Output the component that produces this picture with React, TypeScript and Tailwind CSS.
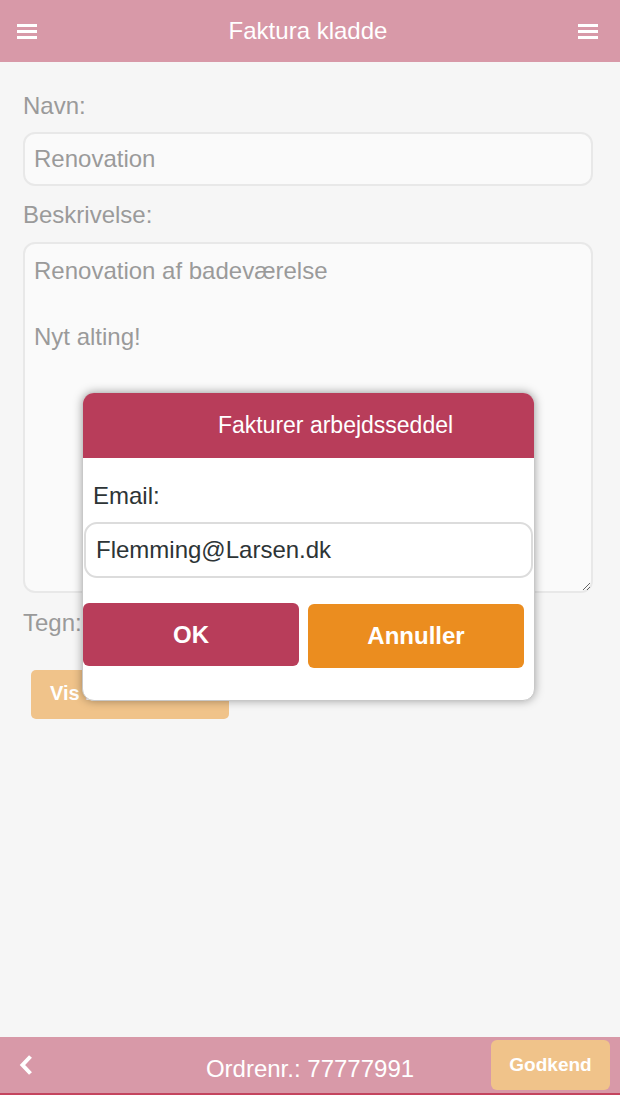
import React from "react";

const font = { fontFamily: '"Liberation Sans", Arial, sans-serif' };

function Burger() {
  return (
    <svg width="20" height="16" viewBox="0 0 20 16" className="block">
      <rect x="0" y="1" width="20" height="3" fill="#fff" />
      <rect x="0" y="7" width="20" height="3" fill="#fff" />
      <rect x="0" y="13" width="20" height="3" fill="#fff" />
    </svg>
  );
}

export default function App() {
  return (
    <div
      className="relative w-[620px] h-[1095px] bg-[#f6f6f6] flex flex-col overflow-hidden"
      style={font}
    >
      {/* Header */}
      <div className="h-[62px] bg-[#d899a8] grid grid-cols-[1fr_auto_1fr] items-center px-[17px] shrink-0">
        <div className="justify-self-start">
          <Burger />
        </div>
        <div className="text-white text-[24px] leading-[28px] mr-[4px]">Faktura kladde</div>
        <div className="justify-self-end mr-[5px]">
          <Burger />
        </div>
      </div>

      {/* Content */}
      <div className="flex-1 px-[23px] pt-[30px] flex flex-col">
        <div className="text-[24px] text-[#9a9a9a] leading-[28px]">Navn:</div>
        <div className="mt-[12px] h-[54px] w-[570px] rounded-[12px] border-2 border-[#e8e8e8] bg-[#fafafa] flex items-center px-[9px] text-[24px] text-[#9a9a9a]">
          Renovation
        </div>
        <div className="mt-[15px] text-[24px] text-[#9a9a9a] leading-[28px]">Beskrivelse:</div>
        <textarea
          readOnly
          className="mt-[13px] h-[351px] w-[570px] rounded-[12px] border-2 border-[#e8e8e8] bg-[#fafafa] px-[9px] pt-[10px] text-[24px] leading-[33px] text-[#9a9a9a] outline-none resize"
          style={font}
          defaultValue={"Renovation af badeværelse\n\nNyt alting!"}
        />
        <div className="mt-[16px] text-[24px] text-[#9a9a9a] leading-[28px]">Tegn:</div>
        <div className="mt-[33px] ml-[8px] w-[198px] h-[49px] rounded-[5px] bg-[#f0c38a] flex items-center px-[19px] pb-[3px] text-white font-bold text-[20px]">
          Vis billede
        </div>
      </div>

      {/* Footer */}
      <div className="h-[58px] bg-[#d899a8] border-b-2 border-[#c4455f] grid grid-cols-[1fr_auto_1fr] items-center px-[10px] shrink-0">
        <div className="justify-self-start ml-[8px]">
          <svg width="16" height="22" viewBox="0 0 16 22" className="block">
            <path d="M12.5 2.5 L4.5 11 L12.5 19.5" stroke="#fff" strokeWidth="4" fill="none" />
          </svg>
        </div>
        <div className="text-white text-[24px] leading-[28px] mt-[7px]">Ordrenr.: 77777991</div>
        <div className="justify-self-end w-[119px] h-[50px] rounded-[6px] bg-[#f0c38a] flex items-center justify-center text-white font-bold text-[19px]">
          Godkend
        </div>
      </div>

      {/* Modal */}
      <div className="absolute left-[82px] top-[392px] w-[453px] h-[309px] rounded-[12px] border border-[#c8c8c8] bg-white shadow-[0_0_10px_rgba(0,0,0,0.35)] overflow-hidden flex flex-col">
        <div className="h-[65px] bg-[#b83d5a] flex items-center justify-center pl-[54px] text-white text-[23px] shrink-0">
          Fakturer arbejdsseddel
        </div>
        <div className="pl-[10px] mt-[24px] text-[24px] text-[#2d3436] leading-[28px]">Email:</div>
        <div className="mt-[12px] ml-[1px] w-[449px] h-[56px] rounded-[13px] border-2 border-[#dcdcdc] flex items-center px-[10px] text-[24px] text-[#2d3436]">
          Flemming@Larsen.dk
        </div>
        <div className="mt-[25px] flex gap-[9px] items-start">
          <div className="w-[216px] h-[63px] rounded-[6px] bg-[#b83d5a] flex items-center justify-center text-white font-bold text-[24px]">
            OK
          </div>
          <div className="mt-[1px] w-[216px] h-[64px] rounded-[6px] bg-[#eb8d1f] flex items-center justify-center text-white font-bold text-[24px]">
            Annuller
          </div>
        </div>
      </div>
    </div>
  );
}
